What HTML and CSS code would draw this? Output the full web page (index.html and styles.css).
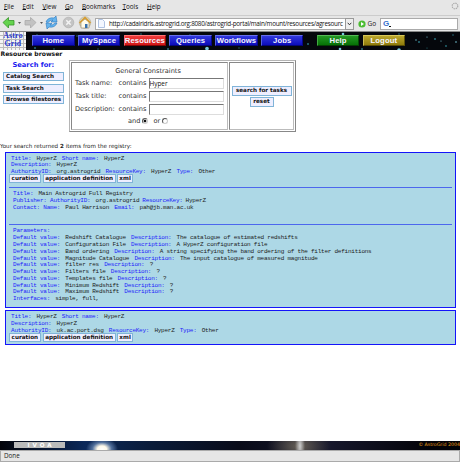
FILE: index.html
```html
<!DOCTYPE html>
<html lang="en">
<head>
<meta charset="utf-8">
<title>Resource browser</title>
<link rel="stylesheet" href="styles.css">
</head>
<body>
<nav class="menubar">
  <span class="m-file"><u>F</u>ile</span><span class="m-edit"><u>E</u>dit</span><span class="m-view"><u>V</u>iew</span><span class="m-go"><u>G</u>o</span><span class="m-book"><u>B</u>ookmarks</span><span class="m-tools"><u>T</u>ools</span><span class="m-help"><u>H</u>elp</span>
  <svg class="throbber" width="8" height="8" viewBox="0 0 8 8"><circle cx="4" cy="4" r="2.8" fill="none" stroke="#aaa" stroke-width="1.2" stroke-dasharray="1.4 .8"/></svg>
</nav>
<div class="toolbar">
  <svg class="tools" width="95" height="15" viewBox="0 0 95 15">
    <path d="M3 6.5 8.5 1.5V4.5H14V9H8.5V12Z" fill="#65d34e" stroke="#369629" stroke-width=".8"/>
    <path d="M18 6h3l-1.500 2zM40 6h3l-1.500 2z" fill="#555"/>
    <path d="M36 6.500 30.500 1.500V4.500H25V9H30.500V12Z" fill="#c2c2c2" stroke="#aaa" stroke-width=".8"/>
    <path d="M46 6Q48 1 54 2L56 0 57 6 51 6 53 4Q50 4 48 6.500Z" fill="#66b4ed" stroke="#2877bf" stroke-width=".6"/>
    <path d="M57 7Q55 12 49 11L47 13 46 7 52 7.500 50 9Q53 9.500 55 7Z" fill="#66b4ed" stroke="#2877bf" stroke-width=".6"/>
    <circle cx="68.500" cy="6.500" r="5.300" fill="#c4c4c4" stroke="#aaa" stroke-width=".6"/><path d="m66.300 4.300 4.400 4.400m0-4.400-4.400 4.400" stroke="#f4f4f4" stroke-width="1.500"/>
    <circle cx="85" cy="6.500" r="5.800" fill="#d8d3b8" stroke="#aaa184" stroke-width=".5"/><path d="M81 6v6h8V6L85 3z" fill="#fffbe8" stroke="#7a6a48" stroke-width=".5"/><path d="m79.500 7 5.500-5.500L90.500 7" fill="none" stroke="#d69a2c" stroke-width="1.500"/><path d="M85 8h2.500v4H85z" fill="#3771ad"/>
  </svg>
  <div class="address">
    <svg width="7" height="9" viewBox="0 0 7 9"><path d="M.5.500H4.500L6.500 2.500V8.500H.5Z" fill="#f3f7ff" stroke="#9db5dc" stroke-width=".8"/></svg>
    <span class="url">http://cadairidris.astrogrid.org:8080/astrogrid-portal/main/mount/resources/agresourc</span>
    <span class="drop"><svg width="5" height="4" viewBox="0 0 5 4"><path d="m.7.800 1.800 2L4.300.800" fill="none" stroke="#333"/></svg></span>
  </div>
  <svg class="goicon" width="8" height="8" viewBox="0 0 8 8"><circle cx="4" cy="4" r="3.600" fill="#4cbc32"/><path d="M3 2v4l3-2z" fill="#fff"/></svg>
  <span class="go">Go</span>
  <div class="searchbox"><b>G</b><i></i></div>
</div>
<header class="banner">
  <svg class="stars" width="460" height="19" viewBox="0 0 460 19">
    <rect width="460" height="19" fill="#05070c"/>
    <g fill="#28707d"><circle cx="37" cy="3" r=".8"/><circle cx="35" cy="16" r="1"/><circle cx="77" cy="4" r=".8"/><circle cx="141" cy="2" r=".8"/><circle cx="168" cy="17" r="1"/><circle cx="98" cy="17" r=".7"/><circle cx="54" cy="17" r=".8"/><circle cx="308" cy="12" r="1"/><circle cx="419" cy="10" r="1"/><circle cx="435" cy="7" r="1"/><circle cx="453" cy="3" r=".8"/><circle cx="446" cy="14" r=".9"/><circle cx="399" cy="2" r=".8"/><circle cx="362" cy="17" r="1"/><circle cx="427" cy="16" r=".6"/><circle cx="239" cy="16" r=".7"/><circle cx="190" cy="3" r=".8"/></g>
    <g fill="#79cbdc"><circle cx="207" cy="16.500" r="1.800"/><circle cx="343" cy="2" r="1.300"/><circle cx="340" cy="17" r="1.300"/><circle cx="399" cy="18" r="1.800"/><circle cx="416" cy="8" r=".7"/><circle cx="441" cy="9" r=".6"/><circle cx="456" cy="10" r=".8"/><circle cx="427" cy="5" r=".6"/></g>
  </svg>
  <div class="logo"><span>Astro</span><span>Grid</span></div>
  <div class="tabs">
    <a>Home</a><a>MySpace</a><a class="red">Resources</a><a>Queries</a><a>Workflows</a><a>Jobs</a><a class="green">Help</a><a class="gold">Logout</a>
  </div>
</header>
<main>
  <h1>Resource browser</h1>
  <section class="top">
    <aside>
      <h2>Search for:</h2>
      <button>Catalog Search</button><button>Task Search</button><button>Browse filestores</button>
    </aside>
    <div class="form">
      <div class="cell fields">
        <p class="caption">General Constraints</p>
        <div class="field"><label>Task name:</label><span>contains</span><div class="input">Hyper</div></div>
        <div class="field"><label>Task title:</label><span>contains</span><div class="input"></div></div>
        <div class="field"><label>Description:</label><span>contains</span><div class="input"></div></div>
        <p class="andor">and <i class="radio on"></i> or <i class="radio"></i></p>
      </div>
      <div class="cell actions"><button>search for tasks</button><button>reset</button></div>
    </div>
  </section>
  <p class="count">Your search returned <b>2</b> items from the registry:</p>
  <article class="entry first">
    <p><b>Title:</b><span>HyperZ</span><b>Short name:</b><span>HyperZ</span></p>
    <p><b>Description:</b><span>HyperZ</span></p>
    <p><b>AuthorityID:</b><span>org.astrogrid</span><b>ResourceKey:</b><span>HyperZ</span><b>Type:</b><span>Other</span></p>
    <div class="buttons"><button>curation</button><button>application definition</button><button>xml</button></div>
    <hr>
    <div class="curation">
      <p><b>Title:</b><span>Main Astrogrid Full Registry</span></p>
      <p><b>Publisher: AuthorityID:</b><span>org.astrogrid</span><b class="near">ResourceKey:</b><span class="near">HyperZ</span></p>
      <p><b>Contact: Name:</b><span>Paul Harrison</span><b>Email:</b><span>pah@jb.man.ac.uk</span></p>
    </div>
    <hr>
    <div class="params">
      <p><b>Parameters:</b></p>
      <p><b>Default value:</b><span>Redshift Catalogue</span><b>Description:</b><span>The catalogue of estimated redshifts</span></p>
      <p><b>Default value:</b><span>Configuration File</span><b>Description:</b><span>A HyperZ configuration file</span></p>
      <p><b>Default value:</b><span>Band ordering</span><b>Description:</b><span>A string specifying the band ordering of the filter definitions</span></p>
      <p><b>Default value:</b><span>Magnitude Catalogue</span><b>Description:</b><span>The input catalogue of measured magnitude</span></p>
      <p><b>Default value:</b><span>filter res</span><b>Description:</b><span>?</span></p>
      <p><b>Default value:</b><span>Filters file</span><b>Description:</b><span>?</span></p>
      <p><b>Default value:</b><span>Templates file</span><b>Description:</b><span>?</span></p>
      <p><b>Default value:</b><span>Minimum Redshift</span><b>Description:</b><span>?</span></p>
      <p><b>Default value:</b><span>Maximum Redshift</span><b>Description:</b><span>?</span></p>
      <p><b>Interfaces:</b><span>simple, full,</span></p>
    </div>
  </article>
  <article class="entry second">
    <p><b>Title:</b><span>HyperZ</span><b>Short name:</b><span>HyperZ</span></p>
    <p><b>Description:</b><span>HyperZ</span></p>
    <p><b>AuthorityID:</b><span>uk.ac.port.dsg</span><b>ResourceKey:</b><span>HyperZ</span><b>Type:</b><span>Other</span></p>
    <div class="buttons"><button>curation</button><button>application definition</button><button>xml</button></div>
  </article>
</main>
<footer><span class="ivoa">IVOA</span><span class="copy">© AstroGrid 2004</span></footer>
<div class="status">Done</div>
</body>
</html>
```
FILE: styles.css
```css
* { box-sizing: border-box; }
body { margin: 0; width: 460px; height: 462px; overflow: hidden; display: flex; flex-direction: column; background: #fff; color: #222; font-family: "DejaVu Sans", sans-serif; font-size: 6.6px; }
p, h1, h2 { margin: 0; white-space: nowrap; }
button { display: block; padding: 0; border: 1px solid #80b4d8; background: #eeeeff; color: #111; font: bold 5.650px/7px "DejaVu Sans", sans-serif; white-space: nowrap; height: 9px; flex: none; }

.menubar { height: 15px; flex: none; display: flex; align-items: flex-start; background: #e6e6e6; padding-left: 4px; font: 6.300px/13px "Open Sans", sans-serif; color: #111; }
.menubar span { flex: none; white-space: nowrap; }
.menubar u { text-underline-offset: 0; text-decoration-thickness: .5px; }
.m-file { width: 18.500px; } .m-edit { width: 20px; } .m-view { width: 22.500px; } .m-go { width: 17px; }
.m-book { width: 40.500px; } .m-tools { width: 24.500px; } .m-help { width: 20px; }
.throbber { margin-left: auto; margin-right: 1px; margin-top: 2px; }
.toolbar { height: 16px; flex: none; display: flex; align-items: center; background: #e6e6e6; border-top: 1px solid #ccc; }
.tools { flex: none; }
.address { display: flex; align-items: center; width: 259px; height: 12px; border: 1px solid #aaa; background: #fff; padding-left: 2px; flex: none; }
.url { margin-left: 4px; white-space: nowrap; font: 6.300px/10px "Open Sans", sans-serif; color: #111; letter-spacing: -.250px; }
.drop { width: 9px; height: 12px; border: 1px solid #999; background: #eee; display: flex; align-items: center; justify-content: center; margin-left: auto; margin-right: -1px; flex: none; }
.goicon { margin-left: 4px; flex: none; }
.go { margin-left: 1.500px; width: 12px; font: 6.500px/10px "Open Sans", sans-serif; flex: none; }
.searchbox { width: 78px; height: 12px; margin-left: .5px; border: 1px solid #aaa; background: #fff; padding-left: 2px; display: flex; align-items: center; font: 8px/10px "Liberation Sans", sans-serif; color: #3972cc; }
.searchbox i { width: 2px; height: 1px; margin-top: 5px; background: #111; }

.banner { position: relative; height: 19px; flex: none; display: flex; border-top: 1px solid #888; overflow: hidden; background: #05070c; }
.stars { position: absolute; left: 0; top: 0; }
.logo { position: relative; width: 26px; height: 18px; flex: none; display: flex; flex-direction: column; align-items: center; background: repeating-linear-gradient(90deg, transparent 0 3px, #bbb 3px 4px), repeating-linear-gradient(#f4f4f4 0 3px, #bbb 3px 4px); font: bold 7.800px/8px "Liberation Serif", serif; color: #2735cb; letter-spacing: .2px; }
.logo span { height: 7.500px; }
.tabs { position: relative; display: flex; gap: 3.300px; margin: 3px 0 0 6px; }
.tabs a { width: 42.500px; height: 11px; border: 1px solid; border-color: #6870ea #05058b #050578 #5560e0; background: linear-gradient(#3138df, #0c0cba); color: #f4f4ff; display: flex; justify-content: center; font: bold 7.700px/9px "Liberation Sans", sans-serif; letter-spacing: .08px; }
.tabs .red { background: linear-gradient(#f03b3b, #d31717); border-color: #ff7777 #8d0808 #800505 #f36666; }
.tabs .green { margin-left: 10px; background: linear-gradient(#239923, #067006); border-color: #57b957 #044b04 #034003 #44a944; }
.tabs .gold { background: linear-gradient(#bba72c, #8e7b0c); border-color: #d8c85c #605306 #574a04 #cbbb50; }

main { flex: 1; display: flex; flex-direction: column; min-height: 0; }
h1 { height: 9px; padding-left: .5px; font: bold 6.100px/8px "DejaVu Sans", sans-serif; color: #111; }
.top { display: flex; height: 82px; flex: none; }
aside { width: 66px; padding-left: 3px; display: flex; flex-direction: column; align-items: flex-start; }
h2 { font: bold 6.700px/9px "DejaVu Sans", sans-serif; color: #1a1aef; height: 13px; padding: 1.500px 0 0 9.500px; }
aside button { width: 61px; text-align: left; padding-left: 2px; margin-bottom: 2.500px; }
.form { margin: 1px 0 0 3px; width: 227px; height: 72px; border: 1px solid; border-color: #b5b5b5 #888 #888 #b5b5b5; display: flex; gap: 1px; padding: 1px; color: #333; }
.cell { border: 1px solid; border-color: #888 #bbb #bbb #888; }
.fields { width: 157px; padding: 3.500px 0 0 3px; }
.caption { height: 10px; line-height: 9px; text-align: center; padding-right: 6px; }
.field { display: flex; height: 13px; align-items: center; }
.field label { width: 43.500px; white-space: nowrap; }
.field span { width: 30px; }
.input { width: 75px; height: 11px; line-height: 9px; border: 1px solid; border-color: #777 #ddd #ddd #777; padding-left: 0; font-size: 6.400px; font-family: "Open Sans", sans-serif; color: #111; }
.andor { display: flex; align-items: center; gap: 3px; height: 11px; padding-left: 53px; }
.radio { width: 6px; height: 6px; border-radius: 50%; border: 1px solid; border-color: #555 #ccc #ccc #555; margin-left: -1px; }
.radio.on { background: radial-gradient(circle, #111 1.200px, transparent 1.700px); margin-right: 2px; }
.actions { flex: 1; display: flex; flex-direction: column; align-items: center; justify-content: center; gap: 1px; }
.actions button { height: 10px; width: 60px; }
.actions button + button { width: 24px; }
.count { height: 10.500px; line-height: 10px; font-size: 5.600px; }
.entry { width: 451px; margin-left: 4.600px; flex: none; border: 1px solid #1414fa; background: #add8e6; padding: 3px 3px 0; font: 6px/6.770px "Liberation Mono", monospace; letter-spacing: -.240px; color: #1c1c1c; }
.entry p { display: flex; gap: 5.200px; height: 6.770px; padding-left: 2.500px; }
.entry b { font-weight: normal; color: #2222fa; }
.entry .near { margin-left: -2.200px; }
.entry hr { height: 1px; border: 0; margin: 0; background: #4c67ee; }
.buttons { display: flex; gap: 1.500px; height: 12.700px; margin-top: -1.500px; }
.buttons button { letter-spacing: 0; width: 32.500px; }
.buttons button:nth-child(2) { width: 73px; }
.buttons button:nth-child(3) { width: 16px; }
.first { height: 156px; }
.curation { height: 36.500px; padding: 3.200px 0 0 2px; }
.params { padding: 3px 0 0 2px; }
.second { height: 35px; margin-top: 2.600px; }

footer { height: 9px; flex: none; display: flex; align-items: flex-start; background: radial-gradient(ellipse 16px 11px at 102px 8px, #fff 0, #fff9e8 28%, #52709c 60%, transparent 100%), radial-gradient(ellipse 5px 18px at 300px 5px, #ccc, transparent), radial-gradient(ellipse 32px 18px at 299px 5px, #696258, transparent), linear-gradient(90deg, #02030a, #0c295a 85px, #0a1c3a 150px, #090b19 240px, #16172c 330px, #030308 430px); }
.ivoa { width: 51px; height: 6px; margin: 1px 0 0 14px; background: #bbb; color: #fff; text-align: center; font: bold 5.600px/6px "DejaVu Sans", sans-serif; letter-spacing: 3px; padding-left: 3px; }
.copy { margin-left: auto; font: 4.700px/8px "DejaVu Sans", sans-serif; color: #e49a16; white-space: nowrap; }
.status { height: 12px; flex: none; border: 1px solid #aaa; background: #e6e6e6; padding-left: 3px; font: 6.300px/10px "Open Sans", sans-serif; }
```
